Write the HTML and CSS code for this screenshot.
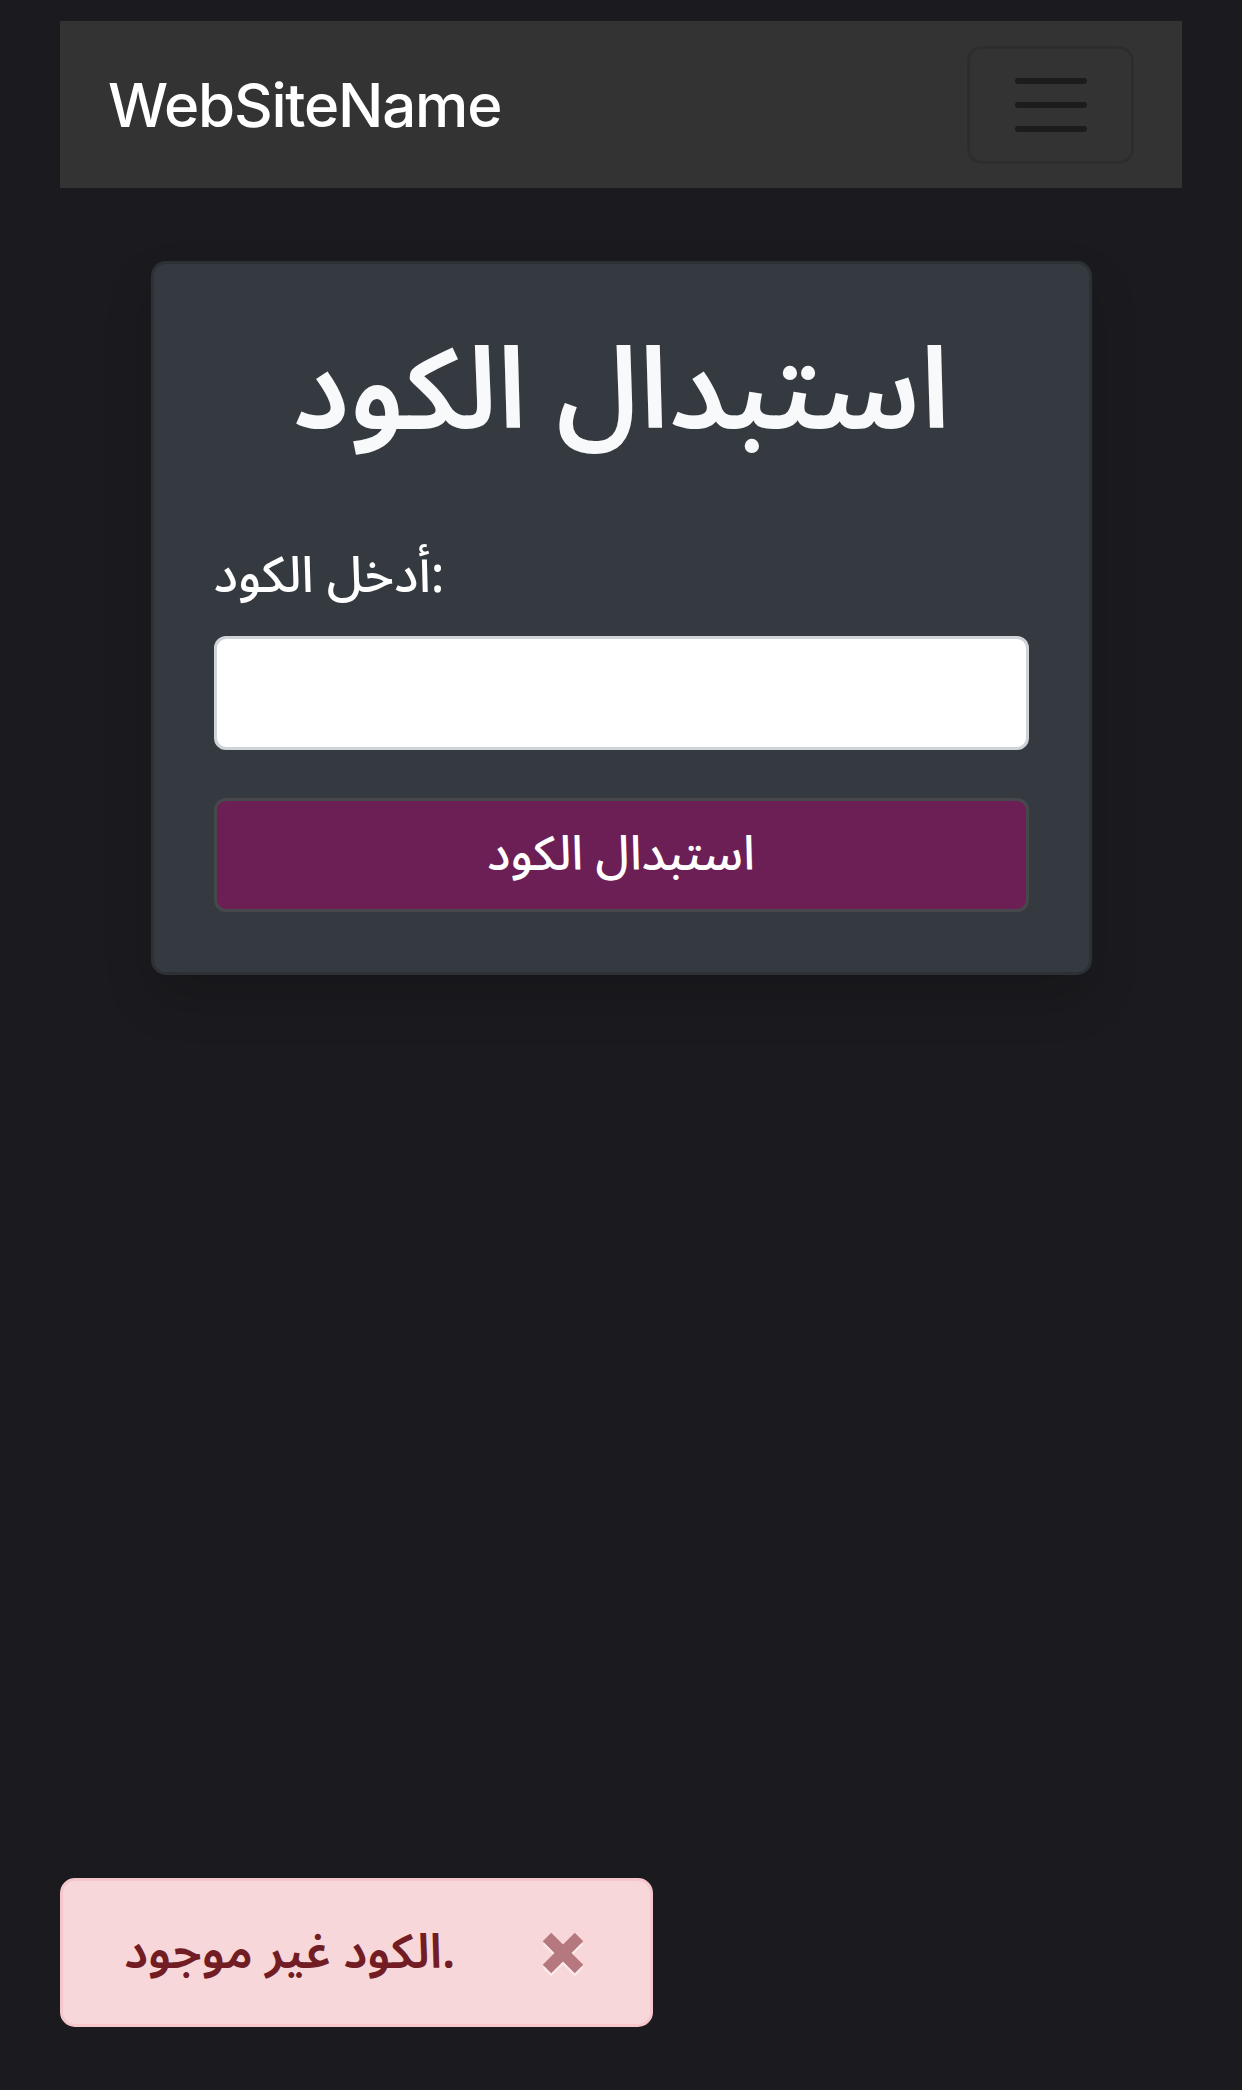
FILE: index.html
```html
<!DOCTYPE html>
<html lang="ar">
<head>
	<meta charset="UTF-8">
	<title>استبدال الكود</title>
	<link rel="stylesheet" href="styles.css">
</head>
<body>
	<!-- شريط التنقل -->
	<nav class="navbar">
		<a class="brand" href="#">WebSiteName</a>
		<button class="toggler" type="button" aria-label="Toggle navigation">
			<svg width="72" height="54" viewBox="0 0 72 54">
				<line x1="3" y1="3" x2="69" y2="3" />
				<line x1="3" y1="27" x2="69" y2="27" />
				<line x1="3" y1="51" x2="69" y2="51" />
			</svg>
		</button>
	</nav>

	<!-- نموذج استبدال الكود -->
	<div class="main">
		<form class="card" action="#" method="post">
			<h1 class="card_title">استبدال الكود</h1>
			<label class="field_label" for="code">أدخل الكود:</label>
			<input class="field_input" type="text" id="code" name="code">
			<button class="submit_btn" type="submit">استبدال الكود</button>
		</form>
	</div>

	<!-- رسالة الخطأ -->
	<div class="alert" role="alert">
		<span class="alert_text">الكود غير موجود.</span>
		<button class="alert_close" type="button" aria-label="Close">
			<svg width="42" height="42" viewBox="0 0 42 42">
				<line x1="5" y1="5" x2="37" y2="37" />
				<line x1="37" y1="5" x2="5" y2="37" />
			</svg>
		</button>
	</div>
</body>
</html>
```

FILE: styles.css
```css
* {
	margin: 0;
	padding: 0;
	box-sizing: border-box;
}

body {
	background-color: #1b1b1f;
	font-family: "Noto Sans Arabic", "DejaVu Sans", "Noto Sans", sans-serif;
	color: #fff;
	direction: ltr;
	min-height: 2090px;
}

.navbar {
	margin: 21px 60px 0;
	height: 167px;
	padding: 0 48px;
	background-color: #333;
	display: flex;
	align-items: center;
	justify-content: space-between;
}

.brand {
	font-family: "Inter", "Liberation Sans", sans-serif;
	font-size: 60px;
	font-weight: 500;
	color: #fff;
	text-decoration: none;
	letter-spacing: -1.2px;
}

.toggler {
	width: 167px;
	height: 118px;
	border: 3px solid rgba(0, 0, 0, 0.1);
	border-radius: 15px;
	background: transparent;
	display: flex;
	align-items: center;
	justify-content: center;
}

.toggler line {
	stroke: #1c1c1c;
	stroke-width: 6;
	stroke-linecap: round;
}

.main {
	display: flex;
	justify-content: center;
	padding-top: 73px;
}

.card {
	width: 941px;
	background-color: #343a40;
	border: 3px solid #2d3136;
	border-radius: 15px;
	padding: 60px;
	box-shadow: 0 24px 48px rgba(0, 0, 0, 0.15);
	display: flex;
	flex-direction: column;
}

.card_title {
	font-size: 114px;
	font-weight: 600;
	line-height: 1.2;
	text-align: center;
	color: #f8f9fa;
	margin-bottom: 79px;
}

.field_label {
	font-size: 50px;
	font-weight: 500;
	line-height: 72px;
	margin-bottom: 24px;
}

.field_input {
	height: 114px;
	border: 3px solid #ced4da;
	border-radius: 12px;
	background-color: #fff;
	font-size: 48px;
	padding: 0 36px;
}

.submit_btn {
	margin-top: 48px;
	height: 114px;
	border: 3px solid #46484b;
	border-radius: 12px;
	background-color: #6b1f55;
	color: #fff;
	font-family: inherit;
	font-size: 48px;
	font-weight: 500;
}

/* الرسالة في أسفل الصفحة */
.alert {
	position: fixed;
	left: 60px;
	bottom: 63px;
	width: 593px;
	height: 149px;
	padding: 0 66px 0 61px;
	background-color: #f8d7da;
	border: 3px solid #f5c6cb;
	border-radius: 15px;
	color: #721c24;
	font-size: 48px;
	font-weight: 600;
	display: flex;
	align-items: center;
	justify-content: space-between;
}

.alert_close {
	border: 0;
	background: transparent;
	display: flex;
	opacity: 0.5;
	filter: drop-shadow(0 3px 0 #fff);
}

.alert_close line {
	stroke: #721c24;
	stroke-width: 12;
}
```
